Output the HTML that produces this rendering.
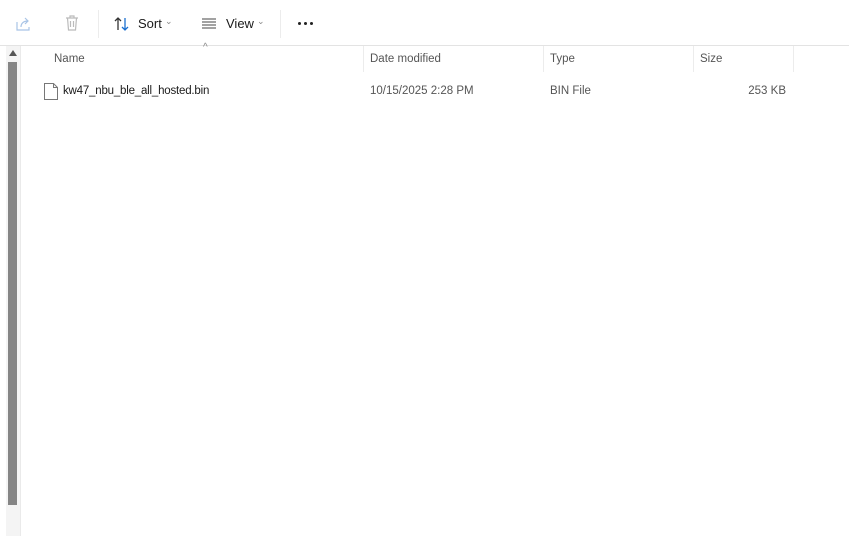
<!DOCTYPE html>
<html><head><meta charset="utf-8"><style>
*{margin:0;padding:0;box-sizing:border-box}
body{width:849px;height:536px;background:#fff;font-family:"Segoe UI","Liberation Sans",sans-serif;font-size:11.5px;color:#1a1a1a;position:relative;overflow:hidden}
.a{position:absolute}
.hdr{color:#555;font-size:11.5px}
.sep{position:absolute;width:1px;background:#ececec}
</style></head><body>
<svg class="a" style="left:14px;top:14px" width="20" height="20" viewBox="0 0 20 20" fill="none" stroke="#a9c4e6" stroke-width="1.2"><path d="M3 8v8h12v-3"/><path d="M7 13c0-4 3-6 7-6M11 4l3 3-3 3"/></svg>
<svg class="a" style="left:62px;top:13px" width="20" height="20" viewBox="0 0 20 20" fill="none" stroke="#bbb" stroke-width="1.2"><path d="M4 5h12M8 5V3h4v2M5.5 5l1 12h7l1-12M8.5 8v6M11.5 8v6"/></svg>
<div class="sep" style="left:98px;top:10px;height:28px"></div>
<svg class="a" style="left:113px;top:15px" width="18" height="18" viewBox="0 0 18 18" fill="none" stroke-width="1.3"><path d="M5 15V3M2 6l3-3 3 3" stroke="#333"/><path d="M12 3v12M9 12l3 3 3-3" stroke="#1a6fd0"/></svg>
<div class="a" style="left:138px;top:16px;font-size:13px">Sort</div>
<div class="a" style="left:165px;top:16px;font-size:9px;color:#888">⌄</div>
<svg class="a" style="left:201px;top:17px" width="16" height="14" viewBox="0 0 16 14" stroke="#444" stroke-width="1"><path d="M1 2h14M1 5h14M1 8h14M1 11h14"/></svg>
<div class="a" style="left:226px;top:16px;font-size:13px">View</div>
<div class="a" style="left:257px;top:16px;font-size:9px;color:#888">⌄</div>
<div class="sep" style="left:280px;top:10px;height:28px"></div>
<div class="a" style="left:298px;top:22px;width:3px;height:3px;background:#222;border-radius:50%;box-shadow:6px 0 #222,12px 0 #222"></div>
<div class="a" style="left:0;top:45px;width:849px;height:1px;background:#e3e3e3"></div>
<div class="a" style="left:6px;top:46px;width:14px;height:490px;background:#f4f4f4"></div>
<div class="a" style="left:9px;top:50px;width:0;height:0;border-left:4px solid transparent;border-right:4px solid transparent;border-bottom:6px solid #555"></div>
<div class="a" style="left:8px;top:62px;width:9px;height:443px;background:#858585"></div>
<div class="a" style="left:20px;top:46px;width:1px;height:490px;background:#eaeaea"></div>
<div class="a" style="left:203px;top:42px;font-size:10px;color:#888">^</div>
<div class="a hdr" style="left:54px;top:53px">Name</div>
<div class="sep" style="left:363px;top:46px;height:26px"></div>
<div class="a hdr" style="left:370px;top:53px">Date modified</div>
<div class="sep" style="left:543px;top:46px;height:26px"></div>
<div class="a hdr" style="left:550px;top:53px">Type</div>
<div class="sep" style="left:693px;top:46px;height:26px"></div>
<div class="a hdr" style="left:700px;top:53px">Size</div>
<div class="sep" style="left:793px;top:46px;height:26px"></div>
<svg class="a" style="left:43px;top:82px" width="16" height="19" viewBox="0 0 16 19" fill="#fff" stroke="#777" stroke-width="1"><path d="M1.5 1.5h9l4 4v12h-13z"/><path d="M10.5 1.5v4h4" fill="none"/></svg>
<div class="a" style="left:63px;top:85px;letter-spacing:-0.2px">kw47_nbu_ble_all_hosted.bin</div>
<div class="a" style="left:370px;top:85px;color:#555">10/15/2025 2:28 PM</div>
<div class="a" style="left:550px;top:85px;color:#555">BIN File</div>
<div class="a" style="left:700px;top:85px;width:86px;text-align:right;color:#555">253 KB</div>
</body></html>
